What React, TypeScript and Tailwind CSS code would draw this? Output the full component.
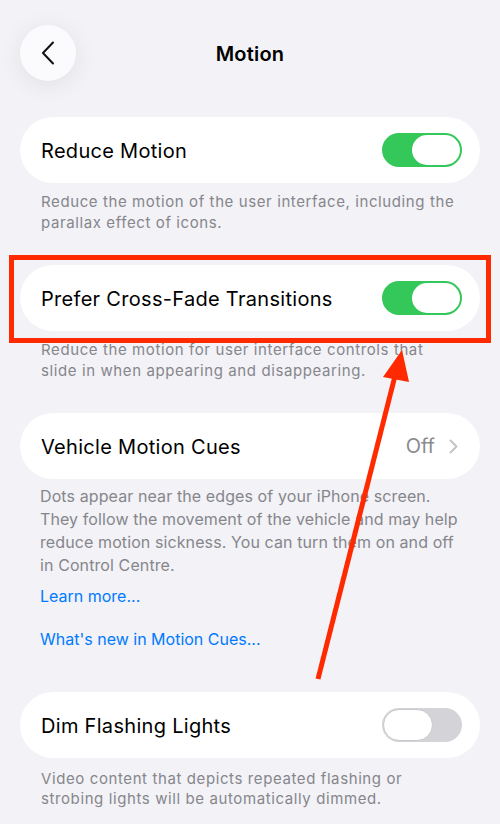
import type { ReactNode } from 'react'

const font = { fontFamily: 'Inter, "Noto Sans", "Liberation Sans", sans-serif' }

function Toggle({ on }: { on: boolean }) {
  return (
    <div
      className={
        on
          ? 'flex h-[34px] w-[80px] items-center justify-end rounded-full bg-[#34c759] p-[2px]'
          : 'flex h-[34px] w-[80px] items-center justify-start rounded-full bg-[#d4d4d8] p-[1px]'
      }
    >
      <div
        className={
          on
            ? 'h-[30px] w-[48px] rounded-full bg-white'
            : 'h-[32px] w-[50px] rounded-full border border-[#c9c9cd] bg-white'
        }
      />
    </div>
  )
}

function Card({ label, right }: { label: string; right: ReactNode }) {
  return (
    <div className="flex h-[66px] items-center justify-between rounded-full bg-white pl-[21px] pr-[18px]">
      <span className="pt-[2px] text-[20px] tracking-[0.3px] text-black">{label}</span>
      {right}
    </div>
  )
}

function Footer({ children, className }: { children: ReactNode; className: string }) {
  return (
    <p className={`px-[21px] text-[15px] leading-[21px] tracking-[0.6px] text-[#86868b] ${className}`}>{children}</p>
  )
}

export default function App() {
  return (
    <div className="relative h-[824px] w-[500px] overflow-hidden bg-[#f2f2f7]" style={font}>
      <div className="relative flex items-center justify-center pt-[25px]">
        <button
          type="button"
          className="absolute left-[20px] top-[25px] flex h-[56px] w-[56px] items-center justify-center rounded-full bg-[#fbfbfd] shadow-[0_4px_24px_rgba(0,0,0,0.08)]"
        >
          <svg width="14" height="24" viewBox="0 0 14 24" fill="none">
            <polyline points="12,1.5 2,12 12,22.5" stroke="#111" strokeWidth="2" strokeLinecap="round" strokeLinejoin="round" />
          </svg>
        </button>
        <h1 className="flex h-[56px] items-center pt-[2px] text-[20px] font-semibold tracking-[0.2px] text-black">
          Motion
        </h1>
      </div>

      <div className="px-5 pt-[36px]">
        <Card label="Reduce Motion" right={<Toggle on />} />
        <Footer className="mt-[8px]">
          Reduce the motion of the user interface, including the parallax effect of icons.
        </Footer>

        <div className="mt-[32px]">
          <Card label="Prefer Cross-Fade Transitions" right={<Toggle on />} />
        </div>
        <Footer className="mt-[8px]">
          Reduce the motion for user interface controls that slide in when appearing and disappearing.
        </Footer>

        <div className="mt-[32px]">
          <Card
            label="Vehicle Motion Cues"
            right={
              <div className="flex items-center gap-[14px] pr-[4px]">
                <span className="text-[20px] text-[#8a8a8e]">Off</span>
                <svg width="9" height="15" viewBox="0 0 9 15" fill="none">
                  <polyline points="1.5,1.5 7.5,7.5 1.5,13.5" stroke="#c4c4c7" strokeWidth="2" strokeLinecap="round" strokeLinejoin="round" />
                </svg>
              </div>
            }
          />
        </div>
        <p className="mt-[6px] px-[20px] text-[16px] leading-[23px] tracking-[0.1px] text-[#86868b]">
          Dots appear near the edges of your iPhone screen. They follow the movement of the vehicle and may help
          reduce motion sickness. You can turn them on and off in Control Centre.
        </p>
        <p className="mt-[8px] px-[20px] text-[16px] leading-[22px] text-[#007aff]">Learn more...</p>
        <p className="mt-[21px] px-[20px] text-[16px] leading-[22px] text-[#007aff]">What's new in Motion Cues...</p>

        <div className="mt-[42px]">
          <Card label="Dim Flashing Lights" right={<Toggle on={false} />} />
        </div>
        <p className="mt-[11px] px-[21px] text-[15px] leading-[20px] tracking-[0.6px] text-[#86868b]">
          Video content that depicts repeated flashing or strobing lights will be automatically dimmed.
        </p>
      </div>

      <div className="pointer-events-none absolute left-[9px] top-[255px] h-[88px] w-[482px] border-[5px] border-[#ff2a00]" />

      <svg className="pointer-events-none absolute left-0 top-0" width="500" height="824" viewBox="0 0 500 824">
        <line x1="318" y1="679" x2="396" y2="372" stroke="#ff2a00" strokeWidth="5" />
        <polygon points="402,350 383,377 409,382" fill="#ff2a00" />
      </svg>
    </div>
  )
}
